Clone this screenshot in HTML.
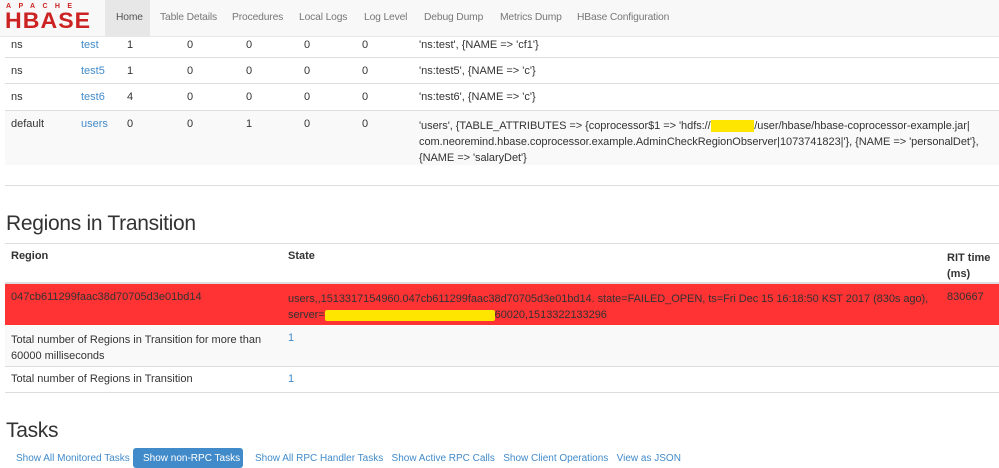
<!DOCTYPE html>
<html><head><meta charset="utf-8"><style>
*{margin:0;padding:0;box-sizing:border-box}
body{width:999px;height:459px;overflow:hidden;background:#fff;font-family:"Liberation Sans",sans-serif;font-size:11px;color:#333;position:relative}
.a{position:absolute;white-space:nowrap}
.l{color:#428bca}
.hr{position:absolute;left:5px;right:0;height:1px;background:#ddd}
.bg{position:absolute;left:5px;right:0;background:#f9f9f9}
nav{position:absolute;left:0;top:0;width:999px;height:37px;background:#f8f8f8;border-bottom:1px solid #e7e7e7}
nav .a{top:12px;font-size:10.3px;color:#777;letter-spacing:-0.15px}
h2{position:absolute;font-weight:normal;font-size:21px;color:#333;left:6px;letter-spacing:-0.3px}
</style></head><body>
<nav>
<div class="a" style="left:6px;top:3px;font-size:7px;letter-spacing:7.4px;color:#c22;font-weight:bold">APACHE</div>
<div class="a" style="left:5px;top:8px;font-size:22px;font-weight:bold;color:#c22;letter-spacing:1px;transform:scaleX(1.05);transform-origin:left">HBASE</div>
<div style="position:absolute;left:105px;top:0;width:45px;height:37px;background:#e7e7e7"></div>
<div class="a" style="left:116px;color:#555">Home</div>
<div class="a" style="left:160px">Table Details</div>
<div class="a" style="left:232px">Procedures</div>
<div class="a" style="left:299px">Local Logs</div>
<div class="a" style="left:364px">Log Level</div>
<div class="a" style="left:424px">Debug Dump</div>
<div class="a" style="left:500px">Metrics Dump</div>
<div class="a" style="left:577px">HBase Configuration</div>
</nav>
<div class="bg" style="top:111px;height:54px"></div>
<div class="hr" style="top:57px"></div><div class="hr" style="top:83px"></div><div class="hr" style="top:110px"></div>
<div class="a" style="left:11px;top:39px">ns</div><div class="a l" style="left:81px;top:39px">test</div><div class="a" style="left:127px;top:39px">1</div><div class="a" style="left:187px;top:39px">0</div><div class="a" style="left:246px;top:39px">0</div><div class="a" style="left:304px;top:39px">0</div><div class="a" style="left:362px;top:39px">0</div><div class="a" style="left:419px;top:39px">'ns:test', {NAME =&gt; 'cf1'}</div>
<div class="a" style="left:11px;top:65px">ns</div><div class="a l" style="left:81px;top:65px">test5</div><div class="a" style="left:127px;top:65px">1</div><div class="a" style="left:187px;top:65px">0</div><div class="a" style="left:246px;top:65px">0</div><div class="a" style="left:304px;top:65px">0</div><div class="a" style="left:362px;top:65px">0</div><div class="a" style="left:419px;top:65px">'ns:test5', {NAME =&gt; 'c'}</div>
<div class="a" style="left:11px;top:91px">ns</div><div class="a l" style="left:81px;top:91px">test6</div><div class="a" style="left:127px;top:91px">4</div><div class="a" style="left:187px;top:91px">0</div><div class="a" style="left:246px;top:91px">0</div><div class="a" style="left:304px;top:91px">0</div><div class="a" style="left:362px;top:91px">0</div><div class="a" style="left:419px;top:91px">'ns:test6', {NAME =&gt; 'c'}</div>
<div class="a" style="left:11px;top:118px">default</div><div class="a l" style="left:81px;top:118px">users</div><div class="a" style="left:127px;top:118px">0</div><div class="a" style="left:187px;top:118px">0</div><div class="a" style="left:246px;top:118px">1</div><div class="a" style="left:304px;top:118px">0</div><div class="a" style="left:362px;top:118px">0</div>
<div class="a" style="left:419px;top:118px;line-height:16px;letter-spacing:-0.05px">'users', {TABLE_ATTRIBUTES =&gt; {coprocessor$1 =&gt; 'hdfs://<span style="background:#ffe600;color:#ffe600">xxxxxxxx</span>/user/hbase/hbase-coprocessor-example.jar|<br>com.neoremind.hbase.coprocessor.example.AdminCheckRegionObserver|1073741823|'}, {NAME =&gt; 'personalDet'},<br>{NAME =&gt; 'salaryDet'}</div>
<div class="hr" style="top:185px"></div>
<h2 style="top:212px">Regions in Transition</h2>
<div class="hr" style="top:243px"></div>
<div class="a" style="left:11px;top:250px;font-weight:bold">Region</div>
<div class="a" style="left:288px;top:250px;font-weight:bold">State</div>
<div class="a" style="left:947px;top:250px;font-weight:bold;line-height:16px">RIT time<br>(ms)</div>
<div style="position:absolute;left:5px;right:0;top:282px;height:43px;background:#f33;border-top:2px solid #ddd"></div>
<div class="a" style="left:11px;top:291px">047cb611299faac38d70705d3e01bd14</div>
<div class="a" style="left:288px;top:291px;line-height:16px;letter-spacing:-0.05px">users,,1513317154960.047cb611299faac38d70705d3e01bd14. state=FAILED_OPEN, ts=Fri Dec 15 16:18:50 KST 2017 (830s ago),<br>server=<span style="display:inline-block;width:170px;height:11px;background:#ffe600;vertical-align:middle;border-radius:2px"></span>60020,1513322133296</div>
<div class="a" style="left:947px;top:291px">830667</div>
<div class="bg" style="top:326px;height:40px"></div>
<div class="a" style="left:11px;top:332px;line-height:16px">Total number of Regions in Transition for more than<br>60000 milliseconds</div>
<div class="a l" style="left:288px;top:332px">1</div>
<div class="hr" style="top:366px"></div>
<div class="a" style="left:11px;top:373px">Total number of Regions in Transition</div>
<div class="a l" style="left:288px;top:373px">1</div>
<div class="hr" style="top:392px"></div>
<h2 style="top:419px">Tasks</h2>
<div style="position:absolute;left:133px;top:448px;width:110px;height:20px;background:#428bca;border-radius:3px"></div>
<div class="a l" style="left:16px;top:453px;font-size:10px">Show All Monitored Tasks</div>
<div class="a" style="left:143px;top:453px;color:#fff;font-size:10px">Show non-RPC Tasks</div>
<div class="a l" style="left:255px;top:453px;font-size:10px">Show All RPC Handler Tasks &nbsp; Show Active RPC Calls &nbsp; Show Client Operations &nbsp; View as JSON</div>
</body></html>
